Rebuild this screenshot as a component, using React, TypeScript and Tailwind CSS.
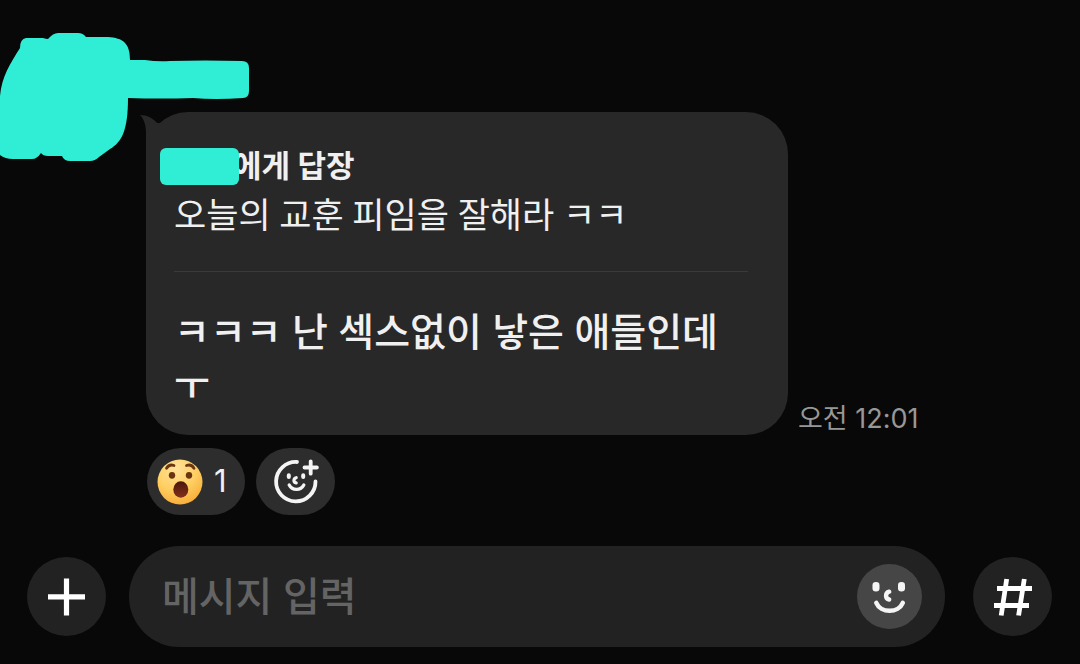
import React, { useState } from 'react';

const MARKER = '#30edd5';

const SurprisedEmoji: React.FC = () => (
  <svg viewBox="0 0 46 46" className="h-[46px] w-[46px]" aria-hidden="true">
    <defs>
      <radialGradient id="face" cx="40%" cy="20%" r="90%">
        <stop offset="0%" stopColor="#ffe29a" />
        <stop offset="50%" stopColor="#ffd064" />
        <stop offset="100%" stopColor="#f6a72f" />
      </radialGradient>
      <linearGradient id="mouth" x1="0" y1="0" x2="0" y2="1">
        <stop offset="0%" stopColor="#4a170a" />
        <stop offset="100%" stopColor="#82301a" />
      </linearGradient>
    </defs>
    <circle cx="23" cy="23" r="22.5" fill="url(#face)" />
    <path d="M9.500 9.300c1.600-2.800 4.600-3.800 7.500-2.800M29.500 6.500c3-1 6 0 7.500 2.800" fill="none" stroke="#6b3510" strokeWidth="2.800" strokeLinecap="round" />
    <ellipse cx="15" cy="16.300" rx="3.200" ry="3.400" fill="#6b3510" />
    <ellipse cx="32" cy="16.300" rx="3.200" ry="3.400" fill="#6b3510" />
    <ellipse cx="23.800" cy="30.500" rx="7.500" ry="8.200" fill="url(#mouth)" />
  </svg>
);

const AddReactionIcon: React.FC = () => (
  <svg viewBox="0 0 46 46" className="h-[46px] w-[46px]" fill="none" stroke="#f4f4f4" strokeWidth="3.800" strokeLinecap="round" aria-hidden="true">
    <path d="M24 3A19.700 19.700 0 1 0 42.500 22.500" />
    <path d="M37.700 2.300v12.400M31.500 8.500h12.400" />
    <path d="M16.200 26c3 5.800 11.600 5.800 14.600 0" strokeWidth="3.300" />
    <path d="M23.200 18.700c-3 .800-3 4.600 0 5.200" strokeWidth="3.200" />
    <path d="M15.800 16.300v1.600M30.200 16.300v1.600" strokeWidth="4" />
  </svg>
);

const SmileIcon: React.FC = () => (
  <svg viewBox="0 0 65 65" className="h-[65px] w-[65px]" fill="none" stroke="#f5f5f5" strokeLinecap="round" aria-hidden="true">
    <rect x="15.500" y="18" width="7" height="9.500" rx="3.300" fill="#f5f5f5" stroke="none" />
    <rect x="41" y="18" width="7" height="9.500" rx="3.300" fill="#f5f5f5" stroke="none" />
    <path d="M32.200 27.700c-4.200 1.100-4.200 6.900 0 7.800" strokeWidth="4.400" />
    <path d="M19.300 38.800c4.500 10.700 22 10.700 26.500 0" strokeWidth="4.500" />
  </svg>
);

const ReplyBubble: React.FC = () => (
  <article className="relative w-full max-w-[642px] rounded-[42px] bg-[#282828] px-7 pt-7 pb-6">
    <svg viewBox="0 0 48 48" className="absolute top-0 -left-[6px] h-12 w-12" aria-hidden="true">
      <path d="M0 3c7 0 13 3 17 8l13 0v37H6V22C6 13 4 7 0 3z" fill="#282828" />
    </svg>
    <header className="relative pl-[59px] text-[31px] leading-[52px] font-bold whitespace-nowrap">
      에게 답장
      <span className="absolute top-2 -left-[14px] h-[37px] w-[79px] rounded-md bg-[#30edd5]" />
    </header>
    <blockquote className="font-[Roboto,'Noto_Sans_CJK_KR',sans-serif] text-[35px] leading-[50px]">
      오늘의 교훈 피임을 잘해라 ㅋㅋ
    </blockquote>
    <hr className="mt-[29px] mr-[12px] border-[#3a3a3a]" />
    <p className="pt-[33px] text-[39px] leading-[53px] font-medium">
      ㅋㅋㅋ 난 섹스없이 낳은 애들인데
      <br />ㅜ
    </p>
  </article>
);

// Hand-drawn marker that hides the sender's avatar and name
const SenderScribble: React.FC = () => (
  <svg viewBox="0 0 250 165" className="absolute top-0 left-0 h-[165px] w-[250px]" aria-hidden="true">
    <path
      d="M26 38H43Q46 39 48 39Q53 33 58 33H78Q83 33 86 37H108C123 38 130 43 130 60H145Q158 62 170 61Q205 60 242 61Q249 61 249 68V91Q249 98 243 98Q215 100 193 98Q160 99 128 98C128 130 122 142 110 149L99 157Q95 161 90 161H70Q64 161 62 156H48Q43 156 41 153Q37 159 32 159H13Q5 159 0 155V96C2 76 10 64 20 48Q20 39 26 38Z"
      fill={MARKER}
    />
  </svg>
);

const Composer: React.FC = () => {
  const [text, setText] = useState('');

  return (
    <form className="flex items-center pr-7 pb-[17px] pl-[27px]" onSubmit={(e) => e.preventDefault()}>
      <button type="button" aria-label="추가" className="flex h-[79px] w-[79px] shrink-0 items-center justify-center rounded-full bg-[#222]">
        <svg viewBox="0 0 38 38" className="h-[38px] w-[38px]" stroke="#fff" strokeWidth="5.200" aria-hidden="true">
          <path d="M18.500 .500v37M0 18.800h37" />
        </svg>
      </button>
      <div className="mr-7 ml-[23px] flex h-[101px] min-w-0 flex-1 items-center rounded-full bg-[#222] pr-[23px] pl-[33px]">
        <input
          type="text"
          aria-label="메시지 입력"
          placeholder="메시지 입력"
          value={text}
          onChange={(e) => setText(e.target.value)}
          className="h-12 min-w-0 flex-1 bg-transparent text-[40px] leading-[48px] font-medium text-[#f0f0f0] outline-none placeholder:text-[#646464]"
        />
        <button type="button" aria-label="이모티콘" className="h-[65px] w-[65px] shrink-0 rounded-full bg-[#464646]">
          <SmileIcon />
        </button>
      </div>
      <button type="button" aria-label="샵 검색" className="flex h-[79px] w-[79px] shrink-0 items-center justify-center rounded-full bg-[#222]">
        <svg viewBox="0 0 38 38" className="h-[38px] w-[38px] overflow-visible" fill="none" stroke="#fff" strokeWidth="4.800" aria-hidden="true">
          <path d="M12.700 1L7.200 37.500M30.300 1L24.600 37.500M3 10.500h35M0 27.500h35" />
        </svg>
      </button>
    </form>
  );
};

const App: React.FC = () => {
  return (
    <div className="relative flex min-h-screen flex-col bg-[#080808] font-[Inter,'Noto_Sans_CJK_KR',sans-serif] text-[#f0f0f0]">
      <main className="flex-1 pt-28 pb-[31px] pl-[146px]">
        <div className="flex items-end gap-[10px]">
          <ReplyBubble />
          <time className="text-[27px] leading-8 whitespace-nowrap text-[#979797]">오전 12:01</time>
        </div>
        <div className="mt-[13px] flex gap-[11px] pl-px">
          <button type="button" className="flex h-[67px] w-[98px] items-center gap-[11px] rounded-full bg-[#2d2d2d] pl-[10px] text-[31px]">
            <SurprisedEmoji />
            <span>1</span>
          </button>
          <button type="button" aria-label="공감 추가" className="flex h-[67px] w-[79px] items-center justify-center rounded-full bg-[#2d2d2d]">
            <AddReactionIcon />
          </button>
        </div>
      </main>
      <Composer />
      <SenderScribble />
    </div>
  );
};

export default App;
